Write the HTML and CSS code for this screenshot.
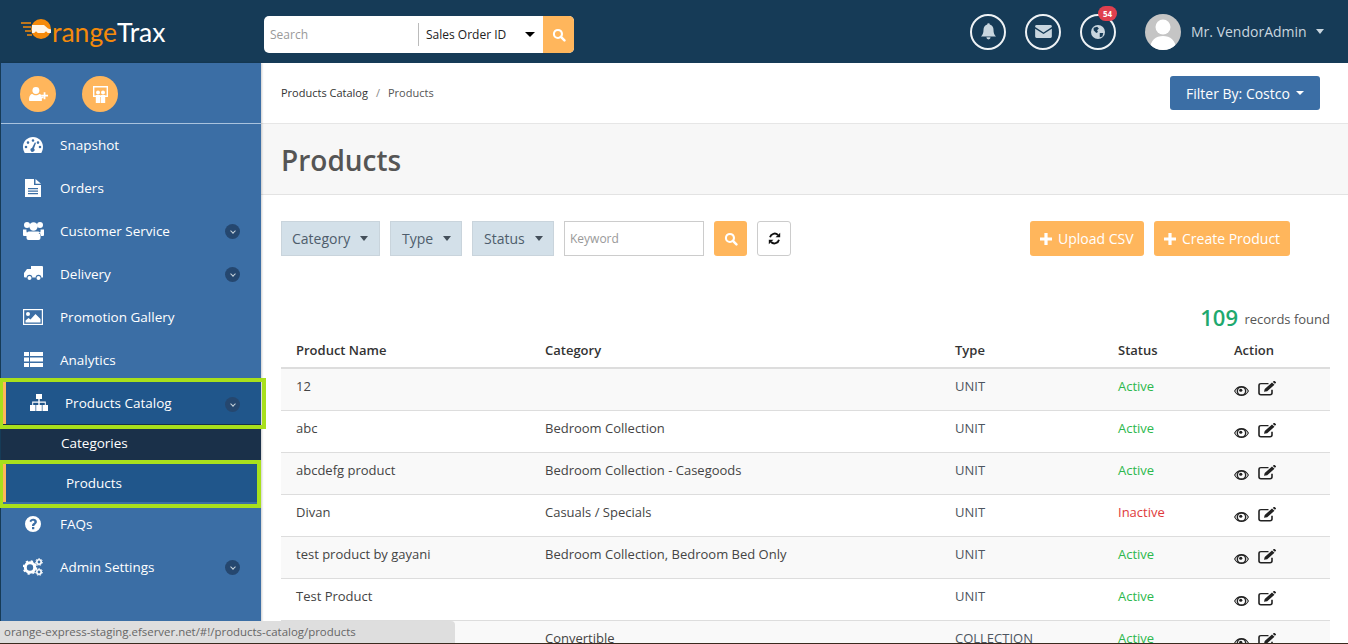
FILE: index.html
```html
<!DOCTYPE html>
<html lang="en">
	<head>
		<meta charset="utf-8">
		<title>OrangeTrax - Products</title>
		<link rel="stylesheet" href="styles.css">
	</head>
	<body>
		<svg class="sprite" xmlns="http://www.w3.org/2000/svg">
			<symbol id="i-search" viewBox="0 0 16 16"><circle cx="6.8" cy="6.8" r="4.6" fill="none" stroke="currentColor" stroke-width="2.4"/><path d="M10.2 10.2l4 4" stroke="currentColor" stroke-width="2.8" stroke-linecap="round"/></symbol>
			<symbol id="i-plus" viewBox="0 0 12 12"><path d="M4.4 0h3.2v4.4H12v3.2H7.6V12H4.4V7.6H0V4.4h4.4z" fill="currentColor"/></symbol>
			<symbol id="i-eye" viewBox="0 0 16 11" preserveAspectRatio="none"><path fill-rule="evenodd" d="M8 0c3.4 0 6.2 2 8 5.500C14.200 9 11.400 11 8 11S1.800 9 0 5.500C1.800 2 4.600 0 8 0zM8 1.800a3.700 3.700 0 1 0 0 7.400 3.700 3.700 0 0 0 0-7.400zM4 2.400C2.900 3.100 2 4.100 1.300 5.500 2 6.900 2.900 7.900 4 8.600a5 5 0 0 1 0-6.200zM12 2.400a5 5 0 0 1 0 6.200c1.100-.7 2-1.700 2.700-3.100-.7-1.400-1.600-2.400-2.700-3.100z" fill="currentColor"/><circle cx="7.200" cy="4.600" r="1.700" fill="currentColor"/></symbol>
			<symbol id="i-edit" viewBox="0 0 18 17" preserveAspectRatio="none"><path d="M14 10v3.500a2 2 0 0 1-2 2H3a2 2 0 0 1-2-2V5a2 2 0 0 1 2-2h7.500" fill="none" stroke="currentColor" stroke-width="1.600"/><path d="M6 12.300l.7-3.200L14 1.800l2.500 2.500-7.300 7.300zM14.800 1l.9-.9a.7.7 0 0 1 1 0l1.100 1.100a.7.7 0 0 1 0 1l-.9.9z" fill="currentColor"/></symbol>
			<symbol id="i-refresh" viewBox="0 0 16 16"><path d="M2.500 6.500A5.800 5.800 0 0 1 12.300 3.700" fill="none" stroke="currentColor" stroke-width="2.300"/><path d="M15 .8v5.700H9.300z" fill="currentColor"/><path d="M13.500 9.500A5.800 5.800 0 0 1 3.700 12.300" fill="none" stroke="currentColor" stroke-width="2.300"/><path d="M1 15.200V9.500h5.700z" fill="currentColor"/></symbol>
		</svg>

		<header class="topbar">
			<a class="logo">
				<svg class="logo-mark" viewBox="0 0 32 26" width="32" height="26">
					<path d="M1 7h10M3 11h8M5 15h6M7 19h5" stroke="#f58a0b" stroke-width="1.500"/>
					<circle cx="21" cy="13" r="10" fill="#f58a0b"/>
					<path d="M12 9h12l4 3.500 3 1V17H12z" fill="#fff" opacity=".9"/>
					<circle cx="16" cy="17" r="1.500" fill="#f58a0b"/>
					<circle cx="26" cy="17" r="1.500" fill="#f58a0b"/>
				</svg>
				<span class="logo-orange">range</span><span class="logo-white">Trax</span>
			</a>
			<form class="search">
				<span class="search-input">Search</span>
				<span class="search-select">Sales Order ID<i class="caret caret-black"></i></span>
				<span class="search-btn"><svg width="14" height="14"><use href="#i-search"/></svg></span>
			</form>
			<div class="top-right">
				<span class="circle">
					<svg width="15" height="17" viewBox="0 0 18 20"><path d="M9 0a1.500 1.500 0 0 1 1.500 1.700C13.500 2.300 15 5 15 8c0 4 1 6 3 8H0c2-2 3-4 3-8 0-3 1.500-5.700 4.500-6.300A1.500 1.500 0 0 1 9 0zM6.500 17h5a2.500 2.500 0 0 1-5 0z" fill="#c9d6df"/></svg>
				</span>
				<span class="circle">
					<svg width="17" height="13" viewBox="0 0 18 14"><path d="M1.500 0h15A1.500 1.500 0 0 1 18 1.500v.7L9 8 0 2.200v-.7A1.500 1.500 0 0 1 1.500 0zM0 4l9 5.800L18 4v8.500a1.500 1.500 0 0 1-1.500 1.500h-15A1.500 1.500 0 0 1 0 12.500z" fill="#c9d6df"/></svg>
				</span>
				<span class="circle">
					<svg width="14" height="14" viewBox="0 0 16 16"><circle cx="8" cy="8" r="8" fill="#c9d6df"/><path d="M3 3l4-1 2 2-2 2 1 2-2 1-3-3zM10 9l4 0-1 4-3 1z" fill="#163b57"/></svg>
					<b class="badge">54</b>
				</span>
				<span class="avatar">
					<svg width="36" height="36" viewBox="0 0 36 36"><circle cx="18" cy="13" r="7.500" fill="#fff"/><path d="M5 36c0-10 6-14 13-14s13 4 13 14z" fill="#fff"/></svg>
				</span>
				<span class="user-name">Mr. VendorAdmin</span>
				<i class="caret caret-user"></i>
			</div>
		</header>

		<div class="layout">
			<aside class="sidebar">
				<div class="quick">
					<span class="quick-btn">
						<svg width="19" height="14" viewBox="0 0 22 16"><circle cx="8" cy="4" r="4" fill="#fff"/><path d="M0 15c0-5 2-7 4-7 1 1 2.500 1.500 4 1.500S11 9 12 8c.7 0 1.300.2 1.900.7V11h3v2h-2v3H1a1 1 0 0 1-1-1z" fill="#fff"/><path d="M17 6h2v3h3v2h-3v3h-2v-3h-3V9h3z" fill="#fff"/></svg>
					</span>
					<span class="quick-btn">
						<svg width="15" height="17" viewBox="0 0 15 17"><path d="M.7 .7h13.600v9.600H.7z" fill="none" stroke="#fff" stroke-width="1.400"/><circle cx="5" cy="6.500" r="2" fill="#fff"/><circle cx="10" cy="6.500" r="2" fill="#fff"/><path d="M2.800 9h4.400v8H2.800zM7.800 9h4.400v8H7.800z" fill="#fff"/></svg>
					</span>
				</div>
				<nav class="nav">
					<a class="nav-item">
						<span class="nav-icon"><svg width="20" height="16" viewBox="0 0 20 16"><path fill-rule="evenodd" d="M10 0c5.500 0 10 4.300 10 9.800 0 2.200-.6 4.300-1.700 6.200H1.700A11 11 0 0 1 0 9.800C0 4.300 4.500 0 10 0zM10 2.200a1.300 1.300 0 1 0 0 2.600 1.300 1.300 0 0 0 0-2.600zM5 4.300A1.300 1.300 0 1 0 5 6.900a1.300 1.300 0 0 0 0-2.600zM15 4.300a1.300 1.300 0 1 0 0 2.600 1.300 1.300 0 0 0 0-2.600zM3 8.700a1.300 1.300 0 1 0 0 2.600 1.300 1.300 0 0 0 0-2.600zM17 8.700a1.300 1.300 0 1 0 0 2.600 1.300 1.300 0 0 0 0-2.600zM11.800 5.500L9 11a2 2 0 1 0 2 .6l2-5.800z" fill="#fff"/></svg></span>
						Snapshot
					</a>
					<a class="nav-item">
						<span class="nav-icon"><svg width="16" height="18" viewBox="0 0 16 18"><path fill-rule="evenodd" d="M0 0h9v6h7v12H0zM3 9v1.300h10V9zM3 11.500v1.300h10v-1.300zM3 14v1.300h10V14z" fill="#fff"/><path d="M10.500 0L16 4.700h-5.500z" fill="#fff"/></svg></span>
						Orders
					</a>
					<a class="nav-item">
						<span class="nav-icon"><svg width="21" height="19" viewBox="0 0 21 19"><circle cx="4" cy="4" r="3" fill="#fff"/><circle cx="17" cy="4" r="3" fill="#fff"/><circle cx="10.500" cy="5.500" r="4.200" fill="#fff"/><path d="M0 8.500h3.500c-.5 2 .5 3.500 2 4.500H4v2H1a1 1 0 0 1-1-1zM21 8.500h-3.500c.5 2-.5 3.500-2 4.500H17v2h3a1 1 0 0 0 1-1zM6 10.500h9c1.500 0 2.500 1.500 2.500 4V17a2 2 0 0 1-2 2h-10a2 2 0 0 1-2-2v-2.500c0-2.500 1-4 2.500-4z" fill="#fff"/></svg></span>
						Customer Service
						<span class="chevron"></span>
					</a>
					<a class="nav-item">
						<span class="nav-icon"><svg width="19" height="15" viewBox="0 0 19 15"><path d="M7 0h11a1 1 0 0 1 1 1v10.500h-1.700a2.800 2.800 0 0 0-5.600 0H8.300a2.800 2.800 0 0 0-5.600 0H1A1 1 0 0 1 0 10.500V7l3-4h4z" fill="#fff"/><circle cx="5.500" cy="12" r="2" fill="#fff"/><circle cx="14.500" cy="12" r="2" fill="#fff"/></svg></span>
						Delivery
						<span class="chevron"></span>
					</a>
					<a class="nav-item">
						<span class="nav-icon"><svg width="20" height="16" viewBox="0 0 20 16"><rect x=".6" y=".6" width="18.800" height="14.800" fill="none" stroke="#fff" stroke-width="1.200"/><circle cx="5" cy="5" r="2" fill="#fff"/><path d="M2.500 13.500v-2l3-2.500 2 1.500 5-5.500 5 5v3.500z" fill="#fff"/></svg></span>
						Promotion Gallery
					</a>
					<a class="nav-item">
						<span class="nav-icon"><svg width="19" height="15" viewBox="0 0 19 15"><path d="M0 0h5v4H0zM6 0h13v4H6zM0 5.500h5v4H0zM6 5.500h13v4H6zM0 11h5v4H0zM6 11h13v4H6z" fill="#fff"/></svg></span>
						Analytics
					</a>
					<a class="nav-item nav-open hl-wide">
						<span class="nav-icon"><svg width="18" height="17" viewBox="0 0 18 17"><path d="M6 0h6v5H9.700v2.500H15.800V11H14.800V8.700H9.700V11H8.300V8.700H3.200V11H2.200V7.500H8.300V5H6zM0 11h5.500v6H0zM6.200 11h5.600v6H6.200zM12.500 11H18v6h-5.500z" fill="#fff"/></svg></span>
						Products Catalog
						<span class="chevron"></span>
					</a>
					<div class="subnav">
						<a class="sub-item">Categories</a>
						<a class="sub-item sub-active hl-narrow">Products</a>
					</div>
					<a class="nav-item">
						<span class="nav-icon"><svg width="16" height="16" viewBox="0 0 16 16"><path fill-rule="evenodd" d="M8 0a8 8 0 1 1 0 16A8 8 0 0 1 8 0zM7 11v2.300h2.300V11zM8.200 2.700C6.300 2.700 5 3.700 4.500 5.200l1.700 1c.3-.8.900-1.400 1.800-1.400.8 0 1.400.4 1.400 1.100 0 .6-.5 1-1.200 1.400-.8.500-1.200 1.200-1.200 2.100v.5h2.300c0-.7.300-1 1-1.500.9-.6 1.600-1.400 1.600-2.600 0-2-1.700-3.100-3.700-3.100z" fill="#fff"/></svg></span>
						FAQs
					</a>
					<a class="nav-item">
						<span class="nav-icon"><svg width="20" height="18" viewBox="0 0 20 18"><circle cx="7" cy="9.500" r="4.700" fill="none" stroke="#fff" stroke-width="3"/><circle cx="7" cy="9.500" r="6.500" fill="none" stroke="#fff" stroke-width="1.600" stroke-dasharray="2.300 2.800"/><circle cx="16" cy="4" r="2.200" fill="none" stroke="#fff" stroke-width="1.600"/><circle cx="16" cy="4" r="3.400" fill="none" stroke="#fff" stroke-width="1" stroke-dasharray="1.500 1.500"/><circle cx="16" cy="14" r="2.200" fill="none" stroke="#fff" stroke-width="1.600"/><circle cx="16" cy="14" r="3.400" fill="none" stroke="#fff" stroke-width="1" stroke-dasharray="1.500 1.500"/></svg></span>
						Admin Settings
						<span class="chevron"></span>
					</a>
				</nav>
			</aside>

			<main class="content">
				<div class="crumbbar">
					<div class="crumbs"><a>Products Catalog</a><span class="crumb-sep">/</span><span class="crumb-cur">Products</span></div>
					<button class="filter-btn">Filter By: Costco<i class="caret caret-filter"></i></button>
				</div>
				<div class="title-band"><h1>Products</h1></div>
				<div class="panel">
					<div class="toolbar">
						<span class="drop drop-cat">Category<i class="caret caret-drop"></i></span>
						<span class="drop drop-type">Type<i class="caret caret-drop"></i></span>
						<span class="drop drop-status">Status<i class="caret caret-drop"></i></span>
						<span class="keyword">Keyword</span>
						<span class="btn-go"><svg width="14" height="14"><use href="#i-search"/></svg></span>
						<span class="btn-refresh"><svg width="13" height="13"><use href="#i-refresh"/></svg></span>
						<span class="btn-orange btn-upload"><svg width="12" height="12"><use href="#i-plus"/></svg>Upload CSV</span>
						<span class="btn-orange btn-create"><svg width="12" height="12"><use href="#i-plus"/></svg>Create Product</span>
					</div>
					<div class="records"><b>109</b> records found</div>
					<table class="grid">
						<colgroup><col class="c-name"><col class="c-cat"><col class="c-type"><col class="c-status"><col class="c-action"></colgroup>
						<thead>
							<tr><th>Product Name</th><th>Category</th><th>Type</th><th>Status</th><th>Action</th></tr>
						</thead>
						<tbody>
							<tr><td>12</td><td></td><td class="type">UNIT</td><td class="on">Active</td><td class="acts"><svg class="eye" width="15" height="10"><use href="#i-eye"/></svg><svg class="edit" width="18" height="15"><use href="#i-edit"/></svg></td></tr>
							<tr><td>abc</td><td>Bedroom Collection</td><td class="type">UNIT</td><td class="on">Active</td><td class="acts"><svg class="eye" width="15" height="10"><use href="#i-eye"/></svg><svg class="edit" width="18" height="15"><use href="#i-edit"/></svg></td></tr>
							<tr><td>abcdefg product</td><td>Bedroom Collection - Casegoods</td><td class="type">UNIT</td><td class="on">Active</td><td class="acts"><svg class="eye" width="15" height="10"><use href="#i-eye"/></svg><svg class="edit" width="18" height="15"><use href="#i-edit"/></svg></td></tr>
							<tr><td>Divan</td><td>Casuals / Specials</td><td class="type">UNIT</td><td class="off">Inactive</td><td class="acts"><svg class="eye" width="15" height="10"><use href="#i-eye"/></svg><svg class="edit" width="18" height="15"><use href="#i-edit"/></svg></td></tr>
							<tr><td>test product by gayani</td><td>Bedroom Collection, Bedroom Bed Only</td><td class="type">UNIT</td><td class="on">Active</td><td class="acts"><svg class="eye" width="15" height="10"><use href="#i-eye"/></svg><svg class="edit" width="18" height="15"><use href="#i-edit"/></svg></td></tr>
							<tr><td>Test Product</td><td></td><td class="type">UNIT</td><td class="on">Active</td><td class="acts"><svg class="eye" width="15" height="10"><use href="#i-eye"/></svg><svg class="edit" width="18" height="15"><use href="#i-edit"/></svg></td></tr>
							<tr><td></td><td>Convertible</td><td class="type">COLLECTION</td><td class="on">Active</td><td class="acts"><svg class="eye" width="15" height="10"><use href="#i-eye"/></svg><svg class="edit" width="18" height="15"><use href="#i-edit"/></svg></td></tr>
						</tbody>
					</table>
				</div>
			</main>
		</div>

		<div class="status-url">orange-express-staging.efserver.net/#!/products-catalog/products</div>
		<div class="taskbar-edge"></div>
	</body>
</html>
```

FILE: styles.css
```css
* {
	box-sizing: border-box;
}
html, body {
	height: 100%;
}
body {
	margin: 0;
	overflow: hidden;
	background-color: #ffffff;
	color: #333333;
	font-family: "Open Sans", sans-serif;
	font-size: 13px;
}
.sprite {
	display: none;
}

/* top bar */
.topbar {
	display: flex;
	align-items: center;
	height: 63px;
	background-color: #163b57;
}
.logo {
	display: flex;
	align-items: center;
	width: 264px;
	padding-left: 20px;
	font-family: "Lato", sans-serif;
	font-size: 26.5px;
}
.logo-mark {
	margin-bottom: 6px;
}
.logo-orange {
	color: #f58a0b;
}
.logo-white {
	color: #ffffff;
}
.search {
	display: flex;
	align-items: center;
	width: 310px;
	height: 37px;
	margin: 6px 0 0;
	background-color: #ffffff;
	border-radius: 5px;
	overflow: hidden;
	font-size: 12px;
}
.search-input {
	width: 154px;
	padding-left: 6px;
	color: #999999;
}
.search-select {
	display: flex;
	align-items: center;
	width: 125px;
	height: 23px;
	padding-left: 7px;
	border-left: 1px solid #bbbbbb;
	color: #222222;
}
.search-btn {
	display: flex;
	align-items: center;
	justify-content: center;
	width: 31px;
	height: 100%;
	background-color: #ffb65c;
	color: #ffffff;
}
.caret {
	display: inline-block;
	width: 0;
	height: 0;
	border-style: solid;
	border-color: currentColor transparent transparent;
}
.caret-black {
	margin-left: 19px;
	border-width: 5px 5px 0;
	color: #000000;
}
.top-right {
	display: flex;
	align-items: center;
	margin-left: 396px;
	color: #c9d6df;
}
.circle {
	position: relative;
	display: flex;
	align-items: center;
	justify-content: center;
	width: 36px;
	height: 36px;
	margin-right: 19px;
	border: 2px solid #eef2f5;
	border-radius: 50%;
}
.badge {
	position: absolute;
	top: -10px;
	right: -3px;
	width: 19px;
	height: 15px;
	background-color: #e0404f;
	border-radius: 8px;
	color: #ffffff;
	font-size: 8px;
	line-height: 15px;
	text-align: center;
}
.avatar {
	width: 36px;
	height: 36px;
	margin-left: 10px;
	background-color: #c5c5c5;
	border-radius: 50%;
	overflow: hidden;
}
.user-name {
	margin-left: 10px;
	font-size: 14px;
}
.caret-user {
	margin-left: 9px;
	border-width: 5px 4.5px 0;
}

/* sidebar */
.layout {
	display: flex;
	height: calc(100% - 63px);
}
.sidebar {
	flex: none;
	width: 261px;
	background-color: #3b6ea5;
	border-left: 1px solid #163b57;
	box-shadow: 1px 0 2px rgba(0, 0, 0, 0.2);
	color: #ffffff;
	position: relative;
	z-index: 2;
}
.quick {
	display: flex;
	align-items: center;
	gap: 26px;
	height: 61px;
	padding: 2px 0 0 19px;
	border-bottom: 1px solid #a9c3de;
}
.quick-btn {
	display: flex;
	align-items: center;
	justify-content: center;
	width: 36px;
	height: 36px;
	background-color: #ffb65c;
	border-radius: 50%;
}
.nav {
	margin-top: -1px;
}
.nav-item {
	position: relative;
	display: flex;
	align-items: center;
	height: 43px;
	font-size: 13.5px;
}
.nav-icon {
	display: flex;
	align-items: center;
	justify-content: center;
	width: 22px;
	margin: 0 16px 0 21px;
}
.chevron {
	position: absolute;
	top: 15px;
	right: 21px;
	width: 15px;
	height: 15px;
	background-color: #25476f;
	border-radius: 50%;
}
.chevron::after {
	content: "";
	position: absolute;
	top: 4.500px;
	left: 6px;
	width: 3px;
	height: 3px;
	border-right: 1px solid #c8d4dc;
	border-bottom: 1px solid #c8d4dc;
	transform: rotate(45deg);
}
.nav-open {
	z-index: 3;
	height: 44px;
	padding-left: 5px;
	background-color: #20568b;
	border-bottom: 1px solid #1a3049;
	box-shadow: inset 5px 0 0 #ffb65c;
}
.nav-open .nav-icon {
	margin: 0 15px 0 22px;
}
.nav-open .chevron {
	top: 16px;
}
.subnav {
	height: 77px;
}
.sub-item {
	position: relative;
	display: block;
	height: 38px;
	padding-left: 60px;
	background-color: #1a3049;
	font-size: 13.5px;
	line-height: 37px;
}
.sub-active {
	height: 39px;
	padding-left: 65px;
	background-color: #20568b;
	box-shadow: inset 5px 0 0 #ffb65c;
	line-height: 40px;
}
/* the green marks lie over the menu */
.hl-wide::after, .hl-narrow::after {
	content: "";
	position: absolute;
	box-sizing: border-box;
	left: -1px;
	border: 4px solid #a8e01c;
	border-left-width: 3px;
	pointer-events: none;
}
.hl-wide::after {
	top: -3px;
	right: -5px;
	height: 51px;
}
.hl-narrow::after {
	top: -3px;
	right: 0;
	height: 48px;
}

/* content */
.content {
	flex: 1;
	min-width: 0;
}
.crumbbar {
	display: flex;
	align-items: center;
	justify-content: space-between;
	height: 61px;
	padding: 0 28px 0 20px;
	border-bottom: 1px solid #e6e6e6;
}
.crumbs {
	margin-bottom: 1px;
	color: #333333;
	font-size: 11px;
}
.crumb-sep {
	margin: 0 8px;
	color: #888888;
}
.crumb-cur {
	color: #555555;
}
.filter-btn {
	display: flex;
	align-items: center;
	width: 150px;
	height: 34px;
	padding: 0 0 0 16px;
	background-color: #3b6ea5;
	border: none;
	border-radius: 3px;
	color: #ffffff;
	font-family: inherit;
	font-size: 14px;
}
.caret-filter {
	margin-left: 6px;
	border-width: 4px 4px 0;
}
.title-band {
	height: 71px;
	padding: 18px 20px 0 20px;
	background-color: #f7f7f7;
	border-bottom: 1px solid #e3e3e3;
}
.title-band h1 {
	margin: 0;
	color: #555555;
	font-size: 28px;
	font-weight: 600;
	line-height: 36px;
}
.panel {
	padding: 26px 18px 0 20px;
}
.toolbar {
	display: flex;
	height: 35px;
	color: #4e5d6c;
	font-size: 14px;
}
.drop {
	display: flex;
	align-items: center;
	margin-right: 10px;
	padding-left: 10px;
	background-color: #d3e0e9;
	border: 1px solid #c9d4dc;
}
.drop-cat {
	width: 99px;
}
.drop-type {
	width: 72px;
	padding-left: 11px;
}
.drop-status {
	width: 82px;
	padding-left: 11px;
}
.caret-drop {
	margin-left: 10px;
	border-width: 5px 4.5px 0;
	color: #444f5a;
}
.keyword {
	display: flex;
	align-items: center;
	width: 140px;
	margin-right: 10px;
	padding-left: 5px;
	border: 1px solid #cccccc;
	color: #999999;
	font-size: 12px;
}
.btn-go, .btn-refresh {
	display: flex;
	align-items: center;
	justify-content: center;
	border-radius: 3px;
}
.btn-go {
	width: 33px;
	margin-right: 10px;
	background-color: #ffb65c;
	color: #ffffff;
}
.btn-refresh {
	width: 34px;
	border: 1px solid #cccccc;
	color: #111111;
}
.btn-orange {
	display: flex;
	align-items: center;
	gap: 6px;
	padding-left: 10px;
	background-color: #ffb65c;
	border-radius: 3px;
	color: #ffffff;
}
.btn-upload {
	width: 114px;
	margin-left: 239px;
}
.btn-create {
	width: 136px;
	margin-left: 10px;
}
.records {
	height: 32px;
	margin-top: 45px;
	color: #555555;
	line-height: 32px;
	text-align: right;
}
.records b {
	margin-right: 3px;
	color: #1fa96f;
	font-size: 22px;
	font-weight: 600;
	vertical-align: -2px;
}
.grid {
	width: 1049px;
	border-collapse: collapse;
	table-layout: fixed;
}
.c-name {
	width: 249px;
}
.c-cat {
	width: 410px;
}
.c-type {
	width: 163px;
}
.c-status {
	width: 116px;
}
.c-action {
	width: 111px;
}
.grid th {
	height: 35px;
	padding: 0 15px;
	border-bottom: 2px solid #dddddd;
	color: #333333;
	font-weight: 600;
	text-align: left;
}
.grid td {
	height: 42px;
	padding: 7px 15px 0;
	border-bottom: 1px solid #dddddd;
	color: #444444;
	line-height: 20px;
	vertical-align: top;
}
.grid tbody tr:nth-child(odd) {
	background-color: #f9f9f9;
}
.grid td.type {
	color: #4d5560;
}
.grid td.on {
	color: #2db84d;
}
.grid td.off {
	color: #e03a3a;
}
.grid td.acts {
	padding-top: 12px;
	color: #222222;
	line-height: 15px;
}
.eye {
	margin-right: 9px;
	vertical-align: bottom;
}
.edit {
	vertical-align: bottom;
}

/* browser link preview, sits over the page */
.status-url {
	position: fixed;
	left: 0;
	bottom: 0;
	width: 455px;
	height: 23px;
	padding: 3px 0 0 4px;
	background-color: #dedede;
	border-top-right-radius: 4px;
	color: #666666;
	font-size: 11.45px;
	z-index: 5;
}
.taskbar-edge {
	position: fixed;
	left: 0;
	right: 0;
	bottom: 0;
	height: 1px;
	background-color: #3a2a1e;
	z-index: 6;
}
```
